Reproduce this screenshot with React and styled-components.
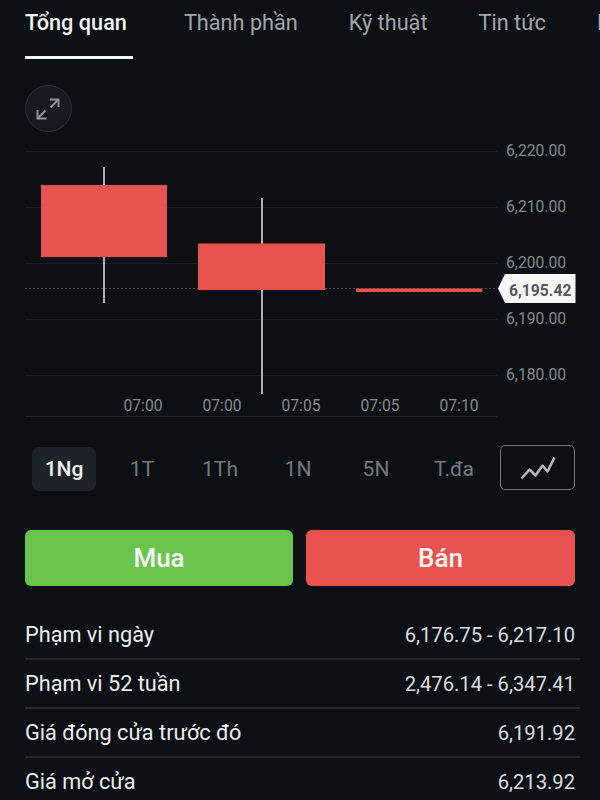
import React from 'react';
import styled, { createGlobalStyle } from 'styled-components';

const GlobalStyle = createGlobalStyle`
    html, body {
        margin: 0;
        padding: 0;
        background: #0c1015;
    }
    * {
        box-sizing: border-box;
    }
`;

const Page = styled.div`
    width: 600px;
    height: 800px;
    overflow: hidden;
    background: #0c1015;
    font-family: Roboto, "Liberation Sans", sans-serif;
    color: #eef0f1;
`;

const Tabs = styled.div`
    display: flex;
    height: 60px;
    padding-left: 25px;
    gap: 51px;
    white-space: nowrap;
    overflow: hidden;
`;

const Tab = styled.div`
    flex: none;
    height: 60px;
    padding-top: 10px;
    padding-right: ${p => (p.$active ? 6 : 0)}px;
    font-size: 21.7px;
    line-height: 26px;
    font-weight: ${p => (p.$active ? 500 : 400)};
    color: ${p => (p.$active ? '#f4f5f6' : '#a2a6a9')};
    position: relative;

    &::after {
        content: '';
        display: ${p => (p.$active ? 'block' : 'none')};
        position: absolute;
        left: 0;
        right: 0;
        top: 56px;
        height: 3px;
        background: #f4f5f6;
    }
`;

const ExpandButton = styled.div`
    width: 47px;
    height: 47px;
    margin: 25px 0 0 25px;
    border-radius: 50%;
    background: #161a20;
    border: 1px solid #2e3238;
    display: flex;
    align-items: center;
    justify-content: center;
`;

const Chart = styled.svg`
    display: block;
    width: 600px;
    height: 298px;
    margin-top: -4px;

    text {
        font-family: Roboto, "Liberation Sans", sans-serif;
        font-size: 15.7px;
        fill: #85898d;
    }
    text.tag {
        font-size: 15.7px;
        font-weight: 700;
        fill: #55585c;
    }
`;

const Ranges = styled.div`
    display: flex;
    align-items: center;
    height: 46px;
    margin-top: 20px;
    padding: 0 25px 0 32px;
`;

const Range = styled.div`
    width: 64px;
    height: 44px;
    margin-right: 14px;
    border-radius: 7px;
    display: flex;
    align-items: center;
    justify-content: center;
    font-size: 21px;
    font-weight: ${p => (p.$active ? 500 : 400)};
    color: ${p => (p.$active ? '#f0f1f2' : '#75797d')};
    background: ${p => (p.$active ? '#1d2329' : 'transparent')};
`;

const ChartType = styled.div`
    flex: none;
    width: 75px;
    height: 45px;
    margin-left: auto;
    align-self: flex-start;
    margin-top: -1px;
    border: 1.5px solid #73777b;
    border-radius: 5px;
    display: flex;
    align-items: center;
    justify-content: center;
`;

const Actions = styled.div`
    display: grid;
    grid-template-columns: 268px 269px;
    justify-content: space-between;
    margin-top: 38px;
    padding: 0 25px;
`;

const ActionButton = styled.div`
    height: 56px;
    border-radius: 6px;
    background: ${p => p.$bg};
    display: flex;
    align-items: center;
    justify-content: center;
    font-size: 26px;
    font-weight: 500;
    color: #f6f8f5;
`;

const Stats = styled.div`
    margin-top: 25px;
    padding: 0 20px 0 25px;
`;

const StatRow = styled.div`
    display: flex;
    justify-content: space-between;
    align-items: center;
    height: 49px;
    padding-right: 5px;
    font-size: 21.7px;
    color: #eceeef;
    border-bottom: 2px solid ${p => (p.$last ? 'transparent' : '#262a30')};
`;

const StatValue = styled.span`
    font-size: 20.2px;
    color: #dcdfe0;
`;

const tabs = ['Tổng quan', 'Thành phần', 'Kỹ thuật', 'Tin tức', 'Lịch sử'];

const ranges = ['1Ng', '1T', '1Th', '1N', '5N', 'T.đa'];

const stats = [
    ['Phạm vi ngày', '6,176.75 - 6,217.10'],
    ['Phạm vi 52 tuần', '2,476.14 - 6,347.41'],
    ['Giá đóng cửa trước đó', '6,191.92'],
    ['Giá mở cửa', '6,213.92'],
];

// chart svg starts at y=128 on the page
const top = 128;
const gridLines = [151, 207, 263, 319, 375];
const prices = [
    ['6,220.00', 151],
    ['6,210.00', 207],
    ['6,200.00', 263],
    ['6,190.00', 319],
    ['6,180.00', 375],
];
const times = [
    ['07:00', 143],
    ['07:00', 222],
    ['07:05', 301],
    ['07:05', 380],
    ['07:10', 459],
];
const candles = [
    { x: 41, y: 185, w: 126, h: 72, wx: 104, wTop: 167, wBottom: 303 },
    { x: 198, y: 243.5, w: 127, h: 46.5, wx: 262, wTop: 198, wBottom: 394 },
    { x: 356, y: 288.5, w: 126, h: 3.5 },
];

const ExpandIcon = () => (
    <svg width="26" height="26" viewBox="0 0 26 26" fill="none" stroke="#8d9195" strokeWidth="2">
        <path d="M14 3.5 H22.5 V11 M22.5 3.5 L14.5 11.5" />
        <path d="M1.5 14 V22.5 H10.5 M1.5 22.5 L9.5 14.5" />
    </svg>
);

const LineIcon = () => (
    <svg width="36" height="24" viewBox="0 0 36 24" fill="none" stroke="#b5b8ba" strokeWidth="2.5" strokeLinejoin="round">
        <path d="M1.5 22.5 L9.5 13.5 L15.5 19.5 L22.5 9.5 L27.5 15.5 L34.5 1.5" />
    </svg>
);

const App = () => {
    return (
        <Page>
            <GlobalStyle />
            <Tabs>
                {tabs.map((t, i) => (
                    <Tab key={t} $active={i === 0}>{t}</Tab>
                ))}
            </Tabs>
            <ExpandButton>
                <ExpandIcon />
            </ExpandButton>
            <Chart viewBox={`0 ${top} 600 298`}>
                {gridLines.map(y => (
                    <line key={y} x1="25" x2="497" y1={y + 0.5} y2={y + 0.5} stroke="#1b2128" strokeWidth="1" />
                ))}
                <line x1="25" x2="497" y1="416.5" y2="416.5" stroke="#22262c" strokeWidth="1" />
                <line x1="25" x2="497" y1="288.5" y2="288.5" stroke="#4c5054" strokeWidth="1" strokeDasharray="2 2" />
                {candles.map(c => (
                    <g key={c.x}>
                        {c.wx && <line x1={c.wx} x2={c.wx} y1={c.wTop} y2={c.wBottom} stroke="#aeb2b5" strokeWidth="2" />}
                        <rect x={c.x} y={c.y} width={c.w} height={c.h} fill="#e9534f" />
                    </g>
                ))}
                {prices.map(([label, y]) => (
                    <text key={label} x="506" y={y + 5}>{label}</text>
                ))}
                {times.map(([label, x]) => (
                    <text key={x} x={x} y="411" textAnchor="middle">{label}</text>
                ))}
                <path d="M498 288.5 L505 274 H575.5 V303 H505 Z" fill="#f6f7f7" />
                <text className="tag" x="509" y="296">6,195.42</text>
            </Chart>
            <Ranges>
                {ranges.map((r, i) => (
                    <Range key={r} $active={i === 0}>{r}</Range>
                ))}
                <ChartType>
                    <LineIcon />
                </ChartType>
            </Ranges>
            <Actions>
                <ActionButton $bg="#6ac54f">Mua</ActionButton>
                <ActionButton $bg="#e9534f">Bán</ActionButton>
            </Actions>
            <Stats>
                {stats.map(([label, value], i) => (
                    <StatRow key={label} $last={i === stats.length - 1}>
                        <span>{label}</span>
                        <StatValue>{value}</StatValue>
                    </StatRow>
                ))}
            </Stats>
        </Page>
    );
};

export default App;
